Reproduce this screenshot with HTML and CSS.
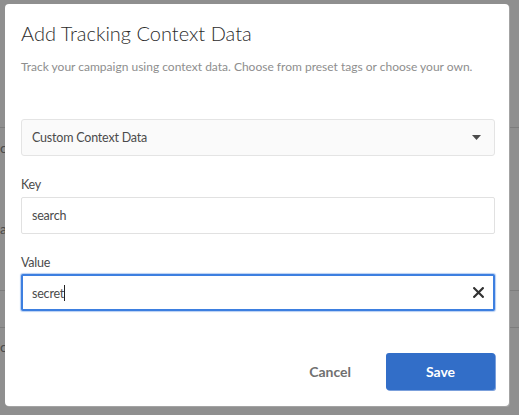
FILE: index.html
```html
<!DOCTYPE html>
<html>
<head>
<meta charset="utf-8">
<link rel="stylesheet" href="styles.css">
</head>
<body>
<div class="page">
  <div class="row r1"></div>
  <div class="row r2"><span class="ch">co</span></div>
  <div class="row r3"><span class="ch">at</span></div>
  <div class="row r4"></div>
  <div class="row r5"><span class="ch">co</span></div>
</div>
<div class="dialog">
  <h1 class="title">Add Tracking Context Data</h1>
  <p class="subtitle">Track your campaign using context data. Choose from preset tags or choose your own.</p>
  <div class="select">
    <span class="select-text">Custom Context Data</span>
    <svg class="caret" width="9" height="5" viewBox="0 0 9 5"><path d="M0 0H9L4.5 5Z" fill="#4b4b4b"/></svg>
  </div>
  <label class="label lbl-key">Key</label>
  <div class="input"><span class="input-text">search</span></div>
  <label class="label lbl-value">Value</label>
  <div class="input focused">
    <span class="input-text">secret<span class="cursor"></span></span>
    <svg class="clear" width="11" height="11" viewBox="0 0 11 11"><path d="M1.2 1.2L9.8 9.8M9.8 1.2L1.2 9.8" stroke="#323232" stroke-width="2.2" stroke-linecap="square"/></svg>
  </div>
  <div class="footer">
    <button class="btn-cancel">Cancel</button>
    <button class="btn-save">Save</button>
  </div>
</div>
</body>
</html>
```
FILE: styles.css
```css
html, body {
  margin: 0;
  padding: 0;
}
body {
  width: 519px;
  height: 415px;
  background: #8f8f8f;
  overflow: hidden;
  position: relative;
  font-family: Lato, "Open Sans", sans-serif;
}
.page {
  display: flex;
  flex-direction: column;
}
.row {
  border-bottom: 1px solid #7d7d7d;
  box-sizing: border-box;
  display: flex;
  align-items: center;
}
.ch {
  font-size: 14px;
  color: #4a4a4a;
  margin-left: 0;
}
.r1 { height: 128px; }
.r2 { height: 38px; border-bottom: none; }
.r3 { height: 125px; }
.r4 { height: 37px; }
.r5 { height: 37px; border-bottom: none; }

.dialog {
  position: absolute;
  left: 5px;
  top: 4px;
  width: 504px;
  height: 402px;
  box-sizing: border-box;
  background: #fff;
  border-radius: 4px;
  padding: 16px 14px 16px 16px;
  display: flex;
  flex-direction: column;
  box-shadow: 1px 1px 0 #a3a3a3;
}
.title {
  margin: 0;
  font-size: 20px;
  line-height: 27px;
  font-weight: 300;
  color: #2c2c2c;
}
.subtitle {
  margin: 11px 0 0;
  font-size: 12px;
  line-height: 18px;
  color: #8e8e8e;
}
.select {
  margin-top: 43px;
  height: 37px;
  box-sizing: border-box;
  border: 1px solid #e4e4e4;
  border-radius: 3px;
  background: #fafafa;
  display: flex;
  align-items: center;
  justify-content: space-between;
  padding: 0 13px 0 10px;
}
.select-text, .input-text {
  font-size: 12.5px;
  letter-spacing: -0.2px;
  color: #4b4b4b;
}
.label {
  display: block;
  font-size: 12.5px;
  letter-spacing: -0.2px;
  line-height: 16px;
  color: #4b4b4b;
}
.lbl-key { margin-top: 21px; }
.lbl-value { margin-top: 21px; }
.input {
  margin-top: 4px;
  height: 37px;
  box-sizing: border-box;
  border: 1px solid #e1e1e1;
  border-radius: 2px;
  background: #fff;
  display: flex;
  align-items: center;
  justify-content: space-between;
  padding: 0 10px;
}
.input.focused {
  margin-top: 3px;
  border: 2px solid #3d7fe0;
  box-shadow: 0 0 1px 1px #b7cff3;
  padding: 0 9px;
}
.cursor {
  display: inline-block;
  width: 1px;
  height: 16px;
  background: #222;
  vertical-align: -3px;
}
.footer {
  margin-top: auto;
  display: flex;
  justify-content: flex-end;
  align-items: center;
}
.btn-cancel {
  background: none;
  border: none;
  font-family: inherit;
  font-size: 14px;
  font-weight: 700;
  color: #707070;
  padding: 0;
  margin-right: 35px;
}
.btn-save {
  width: 109px;
  height: 37px;
  background: #326ec8;
  border: none;
  border-radius: 3px;
  box-shadow: 1px 1px 0 #7ba0dc;
  color: #fff;
  font-family: inherit;
  font-size: 14px;
  font-weight: 700;
}
```
